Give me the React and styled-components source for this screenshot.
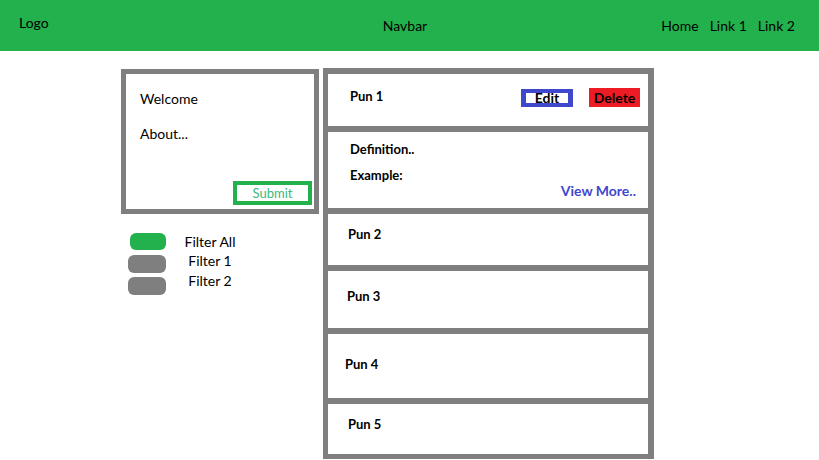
import * as React from 'react';
import styled, {createGlobalStyle} from 'styled-components';

const GlobalStyle = createGlobalStyle`
  body {
    margin: 0;
    background: #fff;
    font-family: Lato, "Open Sans", sans-serif;
    color: #000;
  }
`;

const Nav = styled.header`
  height: 51px;
  background: #22b14c;
  display: grid;
  grid-template-columns: 1fr auto 1fr;
  align-items: center;
  padding: 0 24px 0 19px;
  font-size: 14px;
`;

const Logo = styled.div`
  margin-top: -7px;
`;

const Title = styled.div`
  margin-left: -4px;
`;

const Links = styled.nav`
  display: flex;
  justify-content: flex-end;
  gap: 11px;
`;

const Main = styled.main`
  display: flex;
  align-items: flex-start;
  gap: 4px;
  padding: 17px 0 0 121px;
`;

const Side = styled.aside`
  width: 198px;
  padding-top: 1px;
`;

const InfoCard = styled.section`
  box-sizing: border-box;
  height: 145px;
  border: 5px solid #7f7f7f;
  display: flex;
  flex-direction: column;
  padding: 16px 2px 4px 14px;
  font-size: 14px;
`;

const InfoLine = styled.div`
  margin-bottom: 18px;
`;

const SubmitButton = styled.button`
  margin-top: auto;
  align-self: flex-end;
  width: 79px;
  height: 24px;
  border: 4px solid #22b14c;
  background: #fff;
  color: #3cb87c;
  font: inherit;
  font-size: 13px;
  padding: 0;
`;

const Filters = styled.ul`
  list-style: none;
  margin: 18px 0 0;
  padding: 0 0 0 7px;
  display: flex;
  flex-direction: column;
  gap: 3px;
`;

const FilterRow = styled.li`
  display: grid;
  grid-template-columns: 38px 68px;
  column-gap: 10px;
  align-items: center;
  height: 19px;
  font-size: 14px;
`;

const Pill = styled.span`
  justify-self: ${p => (p.$active ? 'end' : 'start')};
  width: ${p => (p.$active ? 36 : 38)}px;
  height: ${p => (p.$active ? 17 : 18)}px;
  border-radius: 6px;
  background: ${p => (p.$active ? '#22b14c' : '#7f7f7f')};
`;

const FilterLabel = styled.span`
  text-align: center;
  margin-top: ${p => p.$shift || 0}px;
`;

const Feed = styled.div`
  box-sizing: border-box;
  width: 331px;
  background: #7f7f7f;
  padding: 6px 6px 5px 5px;
  display: flex;
  flex-direction: column;
  gap: 6px;
`;

const PunCard = styled.article`
  box-sizing: border-box;
  background: #fff;
  height: ${p => p.$h}px;
  padding: ${p => p.$top}px 12px 0 ${p => p.$left}px;
  font-size: 13px;
  font-weight: 700;
`;

const PunHead = styled.div`
  display: flex;
  align-items: center;
`;

const PunTitle = styled.div`
  flex: 1;
  margin-top: -4px;
`;

const EditButton = styled.button`
  width: 52px;
  height: 18px;
  border: 4px solid #3f48cc;
  border-left-width: 5px;
  border-right-width: 5px;
  background: #fff;
  font: inherit;
  font-size: 14px;
  line-height: 8px;
  padding: 0;
  margin-right: 16px;
`;

const DeleteButton = styled.button`
  width: 51px;
  height: 19px;
  border: none;
  background: #ed1c24;
  font: inherit;
  font-size: 14px;
  padding: 0;
  margin-right: -4px;
`;

const DetailLine = styled.div`
  margin-bottom: 10px;
`;

const ViewMore = styled.a`
  display: block;
  text-align: right;
  color: #3f48cc;
  font-size: 14px;
  margin-top: -11px;
`;

const puns = [
    {title: 'Pun 2', h: 51, top: 12, left: 20},
    {title: 'Pun 3', h: 57, top: 17, left: 19},
    {title: 'Pun 4', h: 64, top: 22, left: 17},
    {title: 'Pun 5', h: 50, top: 12, left: 20},
];

export default function App() {
    return <>
        <GlobalStyle/>
        <Nav>
            <Logo>Logo</Logo>
            <Title>Navbar</Title>
            <Links>
                <span>Home</span>
                <span>Link 1</span>
                <span>Link 2</span>
            </Links>
        </Nav>
        <Main>
            <Side>
                <InfoCard>
                    <InfoLine>Welcome</InfoLine>
                    <InfoLine>About...</InfoLine>
                    <SubmitButton>Submit</SubmitButton>
                </InfoCard>
                <Filters>
                    <FilterRow><Pill $active/><FilterLabel $shift={-1}>Filter All</FilterLabel></FilterRow>
                    <FilterRow><Pill/><FilterLabel $shift={-7}>Filter 1</FilterLabel></FilterRow>
                    <FilterRow><Pill/><FilterLabel $shift={-10}>Filter 2</FilterLabel></FilterRow>
                </Filters>
            </Side>
            <Feed>
                <PunCard $h={52} $top={14} $left={22}>
                    <PunHead>
                        <PunTitle>Pun 1</PunTitle>
                        <EditButton>Edit</EditButton>
                        <DeleteButton>Delete</DeleteButton>
                    </PunHead>
                </PunCard>
                <PunCard $h={76} $top={9} $left={22}>
                    <DetailLine>Definition..</DetailLine>
                    <DetailLine>Example:</DetailLine>
                    <ViewMore>View More..</ViewMore>
                </PunCard>
                {puns.map(p => (
                    <PunCard key={p.title} $h={p.h} $top={p.top} $left={p.left}>{p.title}</PunCard>
                ))}
            </Feed>
        </Main>
    </>;
}
